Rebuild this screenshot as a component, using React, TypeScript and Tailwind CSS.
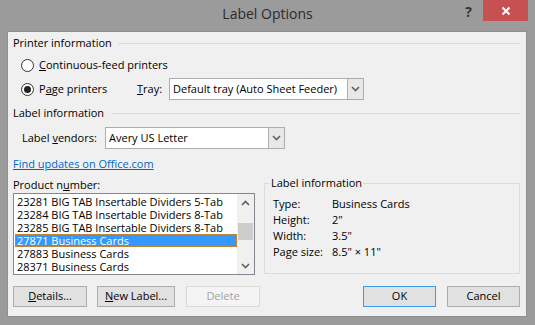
import React from "react";

function Chevron({ dir }: { dir: "up" | "down" }) {
  return (
    <svg width="9" height="6" viewBox="0 0 9 6">
      <polyline
        points={dir === "down" ? "1,1 4.5,4.5 8,1" : "1,5 4.5,1.5 8,5"}
        fill="none"
        stroke="#606060"
        strokeWidth="1.6"
      />
    </svg>
  );
}

function Radio({ checked }: { checked?: boolean }) {
  return (
    <span className="w-[13px] h-[13px] rounded-full border border-[#333] bg-white flex items-center justify-center shrink-0">
      {checked && <span className="w-[7px] h-[7px] rounded-full bg-[#222]" />}
    </span>
  );
}

function Combo({ text, className }: { text: string; className: string }) {
  return (
    <div className={"h-[22px] border border-[#abadb3] bg-white flex " + className}>
      <div className="flex-1 flex items-center pl-[3px] whitespace-nowrap">{text}</div>
      <div className="w-[16px] border-l border-[#abadb3] bg-[#e8e8e8] flex items-center justify-center">
        <Chevron dir="down" />
      </div>
    </div>
  );
}

function Header({ text, gap }: { text: string; gap: string }) {
  return (
    <div className="flex items-center">
      <span className="whitespace-nowrap">{text}</span>
      <div className={"flex-1 h-px bg-[#dcdcdc] " + gap} />
    </div>
  );
}

const items = [
  "23281 BIG TAB Insertable Dividers 5-Tab",
  "23284 BIG TAB Insertable Dividers 8-Tab",
  "23285 BIG TAB Insertable Dividers 8-Tab",
  "27871 Business Cards",
  "27883 Business Cards",
  "28371 Business Cards",
];

function Button({
  children,
  className,
}: {
  children: React.ReactNode;
  className: string;
}) {
  return (
    <div className={"h-[21px] border flex items-center justify-center " + className}>
      {children}
    </div>
  );
}

export default function App() {
  return (
    <div className="w-[535px] h-[325px] bg-[#9b9b9b] overflow-hidden font-['Open_Sans',sans-serif] text-[11px] text-black">
      {/* Title bar */}
      <div className="h-[31px] grid grid-cols-[1fr_auto_1fr]">
        <div />
        <div className="text-[14px] text-[#2b2b2b] pt-[4px] leading-[20px]">Label Options</div>
        <div className="flex justify-end items-start">
          <span className="text-[14px] font-bold text-[#333] leading-[20px] mt-[2px] mr-[11px]">?</span>
          <div className="w-[45px] h-[21px] bg-[#c75050] mr-[7px] flex items-center justify-center">
            <svg width="10" height="10" viewBox="0 0 10 10">
              <path d="M1.5 1.5 L8.5 8.5 M8.5 1.5 L1.5 8.5" stroke="white" strokeWidth="2" />
            </svg>
          </div>
        </div>
      </div>

      {/* Client area */}
      <div className="ml-[7px] w-[520px] h-[286px] bg-[#f0f0f0] border border-[#8f8f8f] pl-[5px] pr-[6px] flex flex-col">
        <div className="h-[23px] flex flex-col justify-center">
          <Header text="Printer information" gap="ml-[6px]" />
        </div>
        <div className="h-[21px] flex items-center pl-[8px]">
          <Radio />
          <span className="ml-[5px]">
            <u>C</u>ontinuous-feed printers
          </span>
        </div>
        <div className="h-[26px] flex items-center pl-[8px]">
          <div className="w-[116px] flex items-center">
            <Radio checked />
            <span className="ml-[5px]">
              P<u>a</u>ge printers
            </span>
          </div>
          <span className="w-[32px]">
            <u>T</u>ray:
          </span>
          <Combo text="Default tray (Auto Sheet Feeder)" className="w-[195px]" />
        </div>
        <div className="h-[22px] flex flex-col justify-center">
          <Header text="Label information" gap="ml-[7px]" />
        </div>
        <div className="h-[28px] flex items-center pl-[9px]">
          <span className="w-[83px]">
            Label <u>v</u>endors:
          </span>
          <Combo text="Avery US Letter" className="w-[180px]" />
        </div>
        <div className="h-[25px] flex items-center">
          <span className="text-[#0066cc] underline">Find updates on Office.com</span>
        </div>

        <div className="flex gap-[9px]">
          <div className="w-[242px] flex flex-col">
            <div className="h-[16px] flex items-center">
              <span>
                Product n<u>u</u>mber:
              </span>
            </div>
            <div className="h-[82px] border border-[#828790] bg-white flex">
              <div className="flex-1 pl-[1px] pt-[1px]">
                {items.map((it, i) => (
                  <div
                    key={i}
                    className={
                      i === 3
                        ? "h-[13px] leading-[13px] pl-[2px] bg-[#3399ff] text-white outline-1 outline-dotted outline-[#c98a3a] -outline-offset-1 whitespace-nowrap overflow-hidden"
                        : "h-[13px] leading-[13px] pl-[2px] whitespace-nowrap overflow-hidden"
                    }
                  >
                    {it}
                  </div>
                ))}
              </div>
              <div className="w-[17px] bg-[#f0f0f0] flex flex-col">
                <div className="h-[17px] flex items-center justify-center">
                  <Chevron dir="up" />
                </div>
                <div className="flex-1">
                  <div className="mt-[12px] mx-[1px] h-[17px] bg-[#cdcdcd]" />
                </div>
                <div className="h-[17px] flex items-center justify-center">
                  <Chevron dir="down" />
                </div>
              </div>
            </div>
          </div>

          <fieldset className="w-[256px] h-[97px] border border-[#dcdcdc] pt-[7px]">
            <legend className="ml-[5px] px-[1px] leading-[12px]">Label information</legend>
            <div className="pl-[8px] grid grid-cols-[59px_1fr] auto-rows-[16px] items-center">
              <span>Type:</span>
              <span>Business Cards</span>
              <span>Height:</span>
              <span>2"</span>
              <span>Width:</span>
              <span>3.5"</span>
              <span>Page size:</span>
              <span>8.5" × 11"</span>
            </div>
          </fieldset>
        </div>

        <div className="mt-[11px] flex justify-between">
          <div className="flex">
            <Button className="w-[74px] border-[#adadad] bg-[#e1e1e1]">
              <span>
                <u>D</u>etails...
              </span>
            </Button>
            <Button className="w-[78px] ml-[10px] border-[#adadad] bg-[#e1e1e1]">
              <span>
                <u>N</u>ew Label...
              </span>
            </Button>
            <Button className="w-[74px] ml-[11px] border-[#dadada] bg-[#f4f4f4] text-[#a3a3a3]">
              <span>Delete</span>
            </Button>
          </div>
          <div className="flex">
            <Button className="w-[73px] border-[#3c9be8] bg-[#e1e1e1]">
              <span>OK</span>
            </Button>
            <Button className="w-[73px] ml-[11px] border-[#adadad] bg-[#e1e1e1]">
              <span>Cancel</span>
            </Button>
          </div>
        </div>
      </div>
    </div>
  );
}
